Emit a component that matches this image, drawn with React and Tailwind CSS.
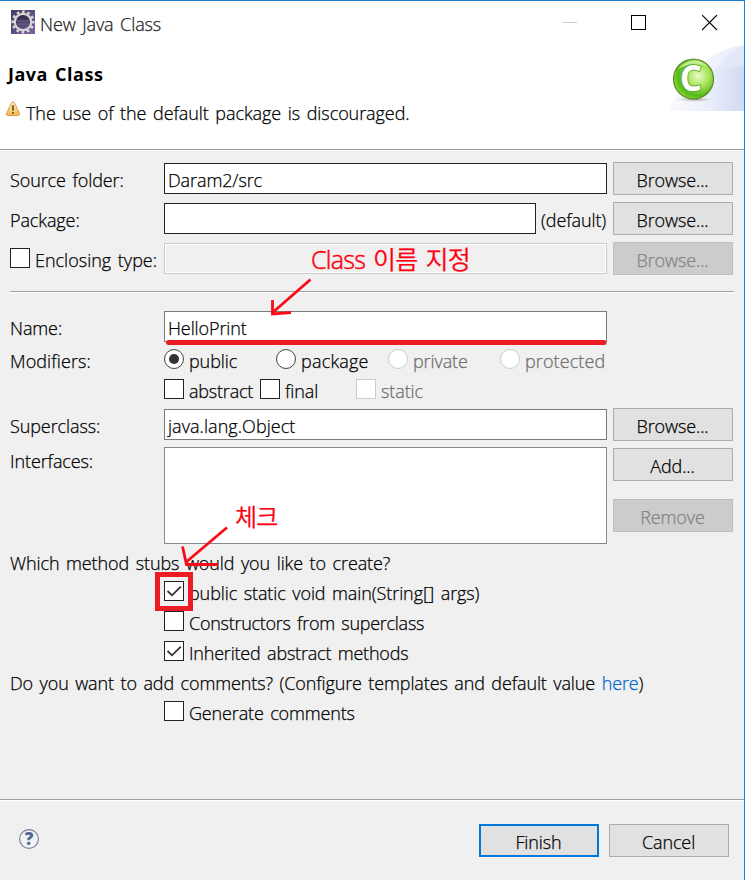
import React, { useState } from 'react';

const TitleIcon = () => (
    <svg width="24" height="24" viewBox="0 0 24 24" className="block">
        <defs>
            <linearGradient id="titleBg" x1="0" y1="0" x2="1" y2="1">
                <stop offset="0" stopColor="#43385f" />
                <stop offset="1" stopColor="#7b63a4" />
            </linearGradient>
            <linearGradient id="titleHole" x1="0" y1="0" x2="0" y2="1">
                <stop offset="0" stopColor="#2a2440" />
                <stop offset="1" stopColor="#66588c" />
            </linearGradient>
        </defs>
        <rect width="24" height="24" fill="url(#titleBg)" />
        <circle cx="12" cy="12" r="10.3" fill="none" stroke="#d9d9d6" strokeWidth="2.6" strokeDasharray="2.7 2.693" strokeDashoffset="1.35" />
        <circle cx="12" cy="12" r="8.2" fill="url(#titleHole)" stroke="#d6d6d0" strokeWidth="2.2" />
        <path d="M6 11h12M6.4 14h11.2" stroke="#7d74a0" strokeWidth="0.8" />
    </svg>
);

const WarningIcon = () => (
    <svg width="14" height="16" viewBox="0 0 14 16" className="block">
        <defs>
            <linearGradient id="warn" x1="0" y1="0" x2="0" y2="1">
                <stop offset="0" stopColor="#fff3cf" />
                <stop offset="1" stopColor="#f3b84d" />
            </linearGradient>
        </defs>
        <path d="M5.6 1.6Q7 -.2 8.4 1.6L13.3 12Q14 14.6 11.8 14.6H2.2Q0 14.6 .7 12Z" fill="url(#warn)" stroke="#d69a48" strokeWidth="1" />
        <path d="M7 4.2V9.4M7 11v1.8" stroke="#75511b" strokeWidth="1.8" />
    </svg>
);

const ClassBanner = () => (
    <svg width="75" height="66" viewBox="0 0 75 66" className="block">
        <defs>
            <linearGradient id="wave" x1="0" y1="0" x2="1" y2="0">
                <stop offset="0" stopColor="#fafbfe" />
                <stop offset="0.55" stopColor="#e9eefa" />
                <stop offset="1" stopColor="#d0daf3" />
            </linearGradient>
            <linearGradient id="waveTop" x1="0" y1="0" x2="1" y2="0">
                <stop offset="0" stopColor="#f8fafe" />
                <stop offset="1" stopColor="#e9eefa" />
            </linearGradient>
            <radialGradient id="ball" cx="0.62" cy="0.42" r="0.62">
                <stop offset="0" stopColor="#e9fbc9" />
                <stop offset="0.45" stopColor="#a5e455" />
                <stop offset="0.8" stopColor="#55b81a" />
                <stop offset="1" stopColor="#7fd52e" />
            </radialGradient>
            <radialGradient id="ballShadow">
                <stop offset="0" stopColor="#8f948c" />
                <stop offset="1" stopColor="#ffffff" stopOpacity="0" />
            </radialGradient>
        </defs>
        <path d="M0 66C8 40 38 4 75 0V66Z" fill="url(#waveTop)" />
        <path d="M38 40C48 18 60 6 75 1V66H30Z" fill="#d9e2f6" opacity="0.5" />
        <path d="M0 66C4 50 10 42 22 36C40 28 56 22 75 21V66Z" fill="url(#wave)" />
        <ellipse cx="26" cy="54.5" rx="24" ry="3" fill="url(#ballShadow)" />
        <circle cx="24.5" cy="34" r="20" fill="url(#ball)" stroke="#65852e" strokeWidth="1.2" />
        <path d="M9 24A19 19 0 0 1 39 22Q25 14 9 24Z" fill="#e4f9bd" opacity="0.7" />
        <text x="21.8" y="45.5" textAnchor="middle" fontFamily="Open Sans, sans-serif" fontWeight="700" fontSize="35" fill="#ffffff" stroke="#4fa524" strokeWidth="1.6" paintOrder="stroke">C</text>
    </svg>
);

const HelpIcon = () => (
    <svg width="20" height="20" viewBox="0 0 20 20" className="block overflow-visible">
        <circle cx="10" cy="10" r="9.4" fill="#f3f3f3" stroke="#6d7f9c" strokeWidth="1.1" />
        <text x="10" y="15.8" textAnchor="middle" fontFamily="Open Sans, sans-serif" fontWeight="800" fontSize="17" letterSpacing="0" fill="#526a93">?</text>
    </svg>
);

const Button = ({ children, disabled, primary, className = '' }) => {
    let look = 'border border-[#adadad] bg-[#e1e1e1] text-black';
    if (disabled) look = 'border border-[#bfbfbf] bg-[#cccccc] text-[#838383]';
    if (primary) look = 'border-2 border-[#0078d7] bg-[#e1e1e1] text-black';
    return (
        <button disabled={disabled} className={`block h-[33px] w-[120px] shrink-0 pr-px pt-[3px] text-center ${look} ${className}`}>
            {children}
        </button>
    );
};

const Tick = () => (
    <svg width="18" height="18" viewBox="0 0 18 18" className="block">
        <path d="M2.5 9L7 13.3L15.8 4.7" fill="none" stroke="#333333" strokeWidth="1.8" />
    </svg>
);

const Check = ({ label, initial = false, disabled, className = '' }) => {
    const [checked, setChecked] = useState(initial);
    return (
        <label className={`flex h-[30px] items-start ${className}`}>
            <span
                onClick={() => !disabled && setChecked(!checked)}
                className={`h-5 w-5 shrink-0 border bg-white ${disabled ? 'border-[#cccccc]' : 'border-[#222222]'}`}
            >
                {checked && <Tick />}
            </span>
            <span className={`ml-[5px] ${disabled ? 'text-[#6d6d6d]' : ''}`}>{label}</span>
        </label>
    );
};

const Radio = ({ label, checked, disabled, onSelect, className = '' }) => (
    <label onClick={onSelect} className={`flex items-start ${className}`}>
        <span
            className={`flex h-5 w-5 shrink-0 items-center justify-center rounded-full border bg-white ${
                disabled ? 'border-[#cccccc]' : 'border-[#444444]'
            }`}
        >
            {checked && <span className="h-[10px] w-[10px] rounded-full bg-[#333333]" />}
        </span>
        <span className={`ml-[5px] ${disabled ? 'text-[#6d6d6d]' : ''}`}>{label}</span>
    </label>
);

const Field = ({ value = '', className = 'border-[#222222]' }) => (
    <div className={`h-[31px] flex-1 border bg-white pl-[3px] pt-1 ${className}`}>{value}</div>
);

const Label = ({ children }) => <div className="w-[154px] shrink-0 pt-[6px]">{children}</div>;

const Annotations = () => (
    <div className="pointer-events-none absolute inset-0 text-[#ff0010]">
        <svg width="745" height="880" viewBox="0 0 745 880" className="absolute inset-0">
            <g fill="none" stroke="#fb0a17" strokeWidth="2.8">
                <path d="M310.5 278.5L271.5 312.5M272.5 299V313L291 311.5" />
                <path d="M227 526.5L185 562M182.5 545.5L186.5 563.5H217.5" />
            </g>
            <path d="M168.5 341.5H604" stroke="#ed1c24" strokeWidth="5" strokeLinecap="round" />
            <rect x="157.5" y="573.5" width="33" height="34" fill="none" stroke="#ed1c24" strokeWidth="5" />
        </svg>
        <span className="absolute left-[311px] top-[241px] text-[25px] leading-[34px] tracking-[-0.7px]">
            <span className="[-webkit-text-stroke:0.5px]">Class</span> 이름 지정
        </span>
        <span className="absolute left-[235px] top-[499px] text-[24px] leading-[34px] tracking-[-0.8px]">체크</span>
    </div>
);

const App = () => {
    const [modifier, setModifier] = useState('public');

    return (
        <div className="relative flex h-[880px] w-[745px] flex-col overflow-hidden whitespace-nowrap border-r border-t border-[#1883d7] bg-[#f0f0f0] font-['Open_Sans','Noto_Sans_CJK_KR',sans-serif] text-[18px] font-[360] leading-6 tracking-[-0.1px] text-black [-webkit-text-stroke:0.25px] [word-spacing:2px]">
            <div className="h-[148px] shrink-0 bg-white">
                <div className="flex h-[44px] items-start">
                    <div className="ml-[11px] mt-[9px]">
                        <TitleIcon />
                    </div>
                    <div className="ml-[5px] mt-[11px] flex-1 text-[#222222]">New Java Class</div>
                    <div className="mt-[21px] h-px w-[15px] bg-[#cccccc]" />
                    <div className="ml-[54px] mt-[14px] h-[15px] w-[15px] border border-black" />
                    <svg width="16" height="16" viewBox="0 0 16 16" className="ml-14 mr-[26px] mt-[14px]">
                        <path d="M0 0L15 15M15 0L0 15" stroke="#000000" strokeWidth="1.1" />
                    </svg>
                </div>
                <div className="flex justify-between">
                    <div className="pl-2 pt-[17px]">
                        <div className="font-bold tracking-[0.5px] [-webkit-text-stroke:0]">Java Class</div>
                        <div className="mt-[13px] flex items-start">
                            <div className="-ml-0.5 mt-0.5">
                                <WarningIcon />
                            </div>
                            <div className="ml-[6px] mt-[2px] tracking-[-0.07px]">The use of the default package is discouraged.</div>
                        </div>
                    </div>
                    <ClassBanner />
                </div>
            </div>
            <div className="h-0.5 shrink-0 border-b border-t border-b-white border-t-[#a0a0a0]" />

            <div className="h-[648px] shrink-0 pl-[10px] pr-[11px] pt-[11px]">
                <div className="flex h-10 items-start">
                    <Label>Source folder:</Label>
                    <div className="mt-px flex flex-1">
                        <Field value="Daram2/src" />
                    </div>
                    <Button className="ml-[6px]">Browse...</Button>
                </div>
                <div className="flex h-10 items-start">
                    <Label>Package:</Label>
                    <div className="mt-px flex flex-1">
                        <Field />
                        <span className="w-[71px] pl-[5px] pt-[5px]">(default)</span>
                    </div>
                    <Button className="ml-[6px]">Browse...</Button>
                </div>
                <div className="flex h-[49px] items-start">
                    <div className="w-[154px] shrink-0 pt-[6px] tracking-[0px]">
                        <Check label="Enclosing type:" />
                    </div>
                    <div className="mt-px flex flex-1">
                        <Field className="border-[#cccccc] bg-[#f0f0f0]! shadow-[inset_0_0_0_1px_#ffffff]" />
                    </div>
                    <Button disabled className="ml-[6px]">
                        Browse...
                    </Button>
                </div>
                <div className="-mr-px h-0.5 border-b border-t border-b-white border-t-[#a0a0a0]" />

                <div className="mt-[18px] flex h-[38px] items-start pr-[126px]">
                    <div className="w-[154px] shrink-0 pt-[5px]">Name:</div>
                    <Field value="HelloPrint" className="border-[#7a7a7a]" />
                </div>
                <div className="flex h-[30px] items-start">
                    <div className="w-[154px] shrink-0 tracking-[0.1px]">Modifiers:</div>
                    <Radio label="public" className="w-28" checked={modifier === 'public'} onSelect={() => setModifier('public')} />
                    <Radio label="package" className="w-28 tracking-[0.2px]" checked={modifier === 'package'} onSelect={() => setModifier('package')} />
                    <Radio label="private" className="w-28" disabled />
                    <Radio label="protected" className="tracking-[0.1px]" disabled />
                </div>
                <div className="flex h-[29px] items-start pl-[154px]">
                    <Check label="abstract" className="w-24 tracking-[-0.2px]" />
                    <Check label="final" className="w-24" />
                    <Check label="static" disabled />
                </div>
                <div className="flex h-[39px] items-start">
                    <Label>Superclass:</Label>
                    <div className="mt-px flex flex-1">
                        <Field value="java.lang.Object" className="border-[#7a7a7a] tracking-[0.05px]" />
                    </div>
                    <Button className="ml-[6px]">Browse...</Button>
                </div>
                <div className="flex h-[104px] items-start">
                    <div className="w-[154px] shrink-0 pt-[2px]">Interfaces:</div>
                    <div className="h-[97px] flex-1 border border-[#828790] bg-white" />
                    <div className="ml-[6px] mt-px">
                        <Button>Add...</Button>
                        <Button disabled className="mt-[18px]">
                            Remove
                        </Button>
                    </div>
                </div>

                <div className="h-[30px]">Which method stubs would you like to create?</div>
                <div className="pl-[154px]">
                    <Check label="public static void main(String[] args)" initial />
                    <Check label="Constructors from superclass" className="tracking-[-0.27px]" />
                    <Check label="Inherited abstract methods" initial className="tracking-[-0.2px]" />
                </div>
                <div className="h-[30px] tracking-[-0.12px]">
                    Do you want to add comments? (Configure templates and default value{' '}
                    <a className="text-[#0066cc]">here</a>)
                </div>
                <Check label="Generate comments" className="pl-[154px] tracking-[-0.15px]" />
            </div>

            <div className="h-0.5 shrink-0 border-b border-t border-b-white border-t-[#a0a0a0]" />
            <div className="flex flex-1 items-start pt-[23px]">
                <div className="ml-[19px] mt-[5px] flex-1">
                    <HelpIcon />
                </div>
                <Button primary>Finish</Button>
                <Button className="ml-[10px] mr-[15px]">Cancel</Button>
            </div>

            <Annotations />
        </div>
    );
};

export default App;
